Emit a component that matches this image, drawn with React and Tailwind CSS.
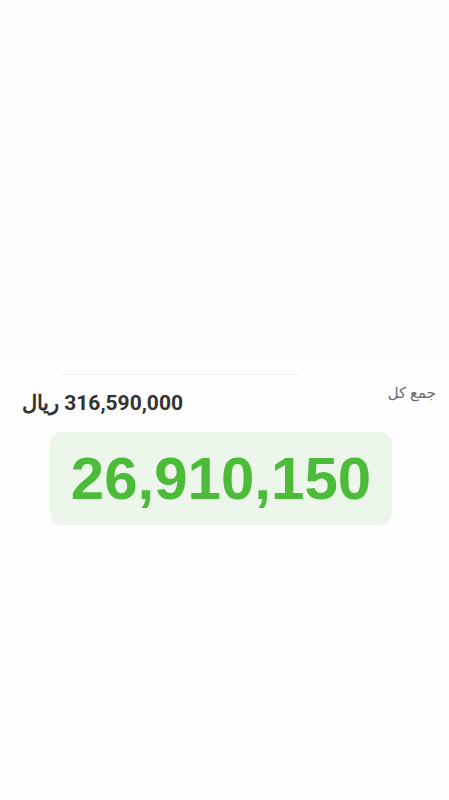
import React from "react";

// totals card
const Total = () => {
  return (
    <div className="flex flex-col">
      {/* faded row above */}
      <div className="h-[362px] bg-[#fcfcfc]" />
      <div className="h-[13px] flex items-start pl-[60px]">
        <div className="h-px w-[240px] bg-[#f2f2f2] mt-[12px]" />
      </div>

      <div className="flex justify-between items-start pl-[22px] pr-[13px]">
        <div
          className="mt-[16px] text-[21px] font-bold text-[#333333] leading-[24px] tracking-[0.4px]"
          dir="rtl"
          style={{ fontFamily: "Roboto, 'Noto Sans', sans-serif" }}
        >
          316,590,000 ریال
        </div>
        <div
          className="mt-[8px] text-[15px] text-[#6b6b6b] leading-[18px]"
          dir="rtl"
          style={{ fontFamily: "'Noto Sans', 'DejaVu Sans', sans-serif" }}
        >
          جمع کل
        </div>
      </div>

      <div className="mt-[17px] ml-[50px] w-[342px] h-[93px] rounded-[12px] bg-[#ecf6ea] flex items-center justify-center">
        <span
          className="text-[60px] font-bold text-[#4cbb3a] leading-none"
          style={{ fontFamily: "'Liberation Sans', Arial, sans-serif" }}
        >
          26,910,150
        </span>
      </div>
    </div>
  );
};

export default function App() {
  return (
    <div className="min-h-[800px] w-[449px] bg-[#fefefe]">
      <Total />
    </div>
  );
}
